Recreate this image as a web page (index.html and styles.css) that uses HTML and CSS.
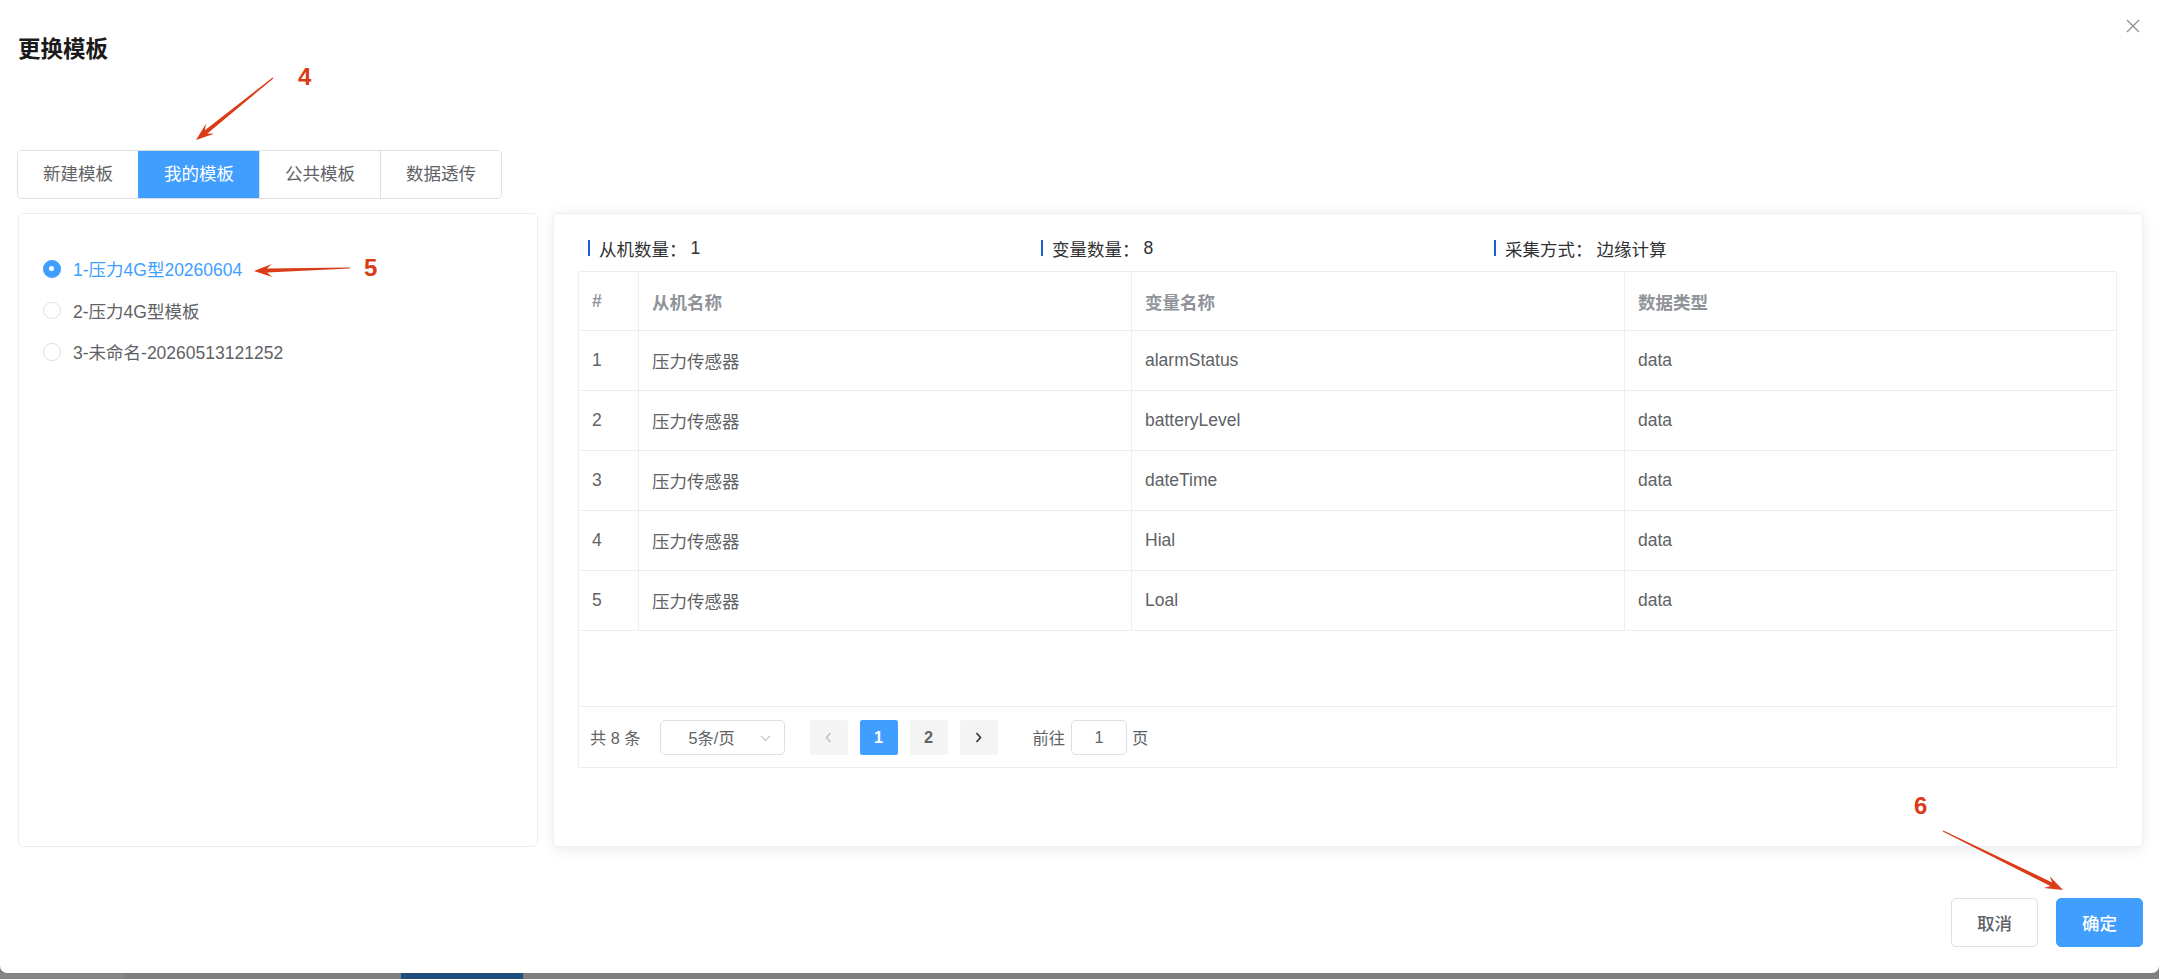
FILE: index.html
```html
<!DOCTYPE html>
<html lang="zh-CN">
<head>
<meta charset="utf-8">
<title>更换模板</title>
<link rel="stylesheet" href="styles.css">
</head>
<body>
<div class="dialog">
  <header class="dialog-header">
    <span class="dialog-title">更换模板</span>
    <button class="close-btn" aria-label="关闭">
      <svg width="14" height="14" viewBox="0 0 14 14"><path d="M1 1L13 13M13 1L1 13" stroke="#909399" stroke-width="1.4" fill="none"/></svg>
    </button>
  </header>

  <div class="tabs">
    <span class="tab">新建模板</span><span class="tab active">我的模板</span><span class="tab">公共模板</span><span class="tab">数据透传</span>
  </div>

  <div class="panels">
    <div class="panel-left">
      <label class="radio checked"><span class="radio-dot"></span><span class="radio-label">1-压力4G型20260604</span></label>
      <label class="radio"><span class="radio-dot"></span><span class="radio-label">2-压力4G型模板</span></label>
      <label class="radio"><span class="radio-dot"></span><span class="radio-label">3-未命名-20260513121252</span></label>
    </div>

    <div class="panel-right">
      <div class="stats">
        <div class="stat"><span class="stat-bar"></span>从机数量：<span class="stat-value">1</span></div>
        <div class="stat"><span class="stat-bar"></span>变量数量：<span class="stat-value">8</span></div>
        <div class="stat"><span class="stat-bar"></span>采集方式：<span class="stat-value">边缘计算</span></div>
      </div>

      <div class="table-box">
        <div class="trow thead">
          <div class="cell">#</div><div class="cell">从机名称</div><div class="cell">变量名称</div><div class="cell">数据类型</div>
        </div>
        <div class="trow">
          <div class="cell">1</div><div class="cell">压力传感器</div><div class="cell">alarmStatus</div><div class="cell">data</div>
        </div>
        <div class="trow">
          <div class="cell">2</div><div class="cell">压力传感器</div><div class="cell">batteryLevel</div><div class="cell">data</div>
        </div>
        <div class="trow">
          <div class="cell">3</div><div class="cell">压力传感器</div><div class="cell">dateTime</div><div class="cell">data</div>
        </div>
        <div class="trow">
          <div class="cell">4</div><div class="cell">压力传感器</div><div class="cell">Hial</div><div class="cell">data</div>
        </div>
        <div class="trow">
          <div class="cell">5</div><div class="cell">压力传感器</div><div class="cell">Loal</div><div class="cell">data</div>
        </div>
        <div class="tempty"></div>
        <div class="pager">
          <span class="pager-total">共 8 条</span>
          <span class="pager-select">5条/页
            <svg class="select-arrow" width="11" height="7" viewBox="0 0 11 7"><path d="M1 1L5.5 5.5L10 1" stroke="#C0C4CC" stroke-width="1.2" fill="none"/></svg>
          </span>
          <span class="pbtn disabled"><svg width="7" height="11" viewBox="0 0 7 11"><path d="M5.5 1L1.5 5.5L5.5 10" stroke="#C0C4CC" stroke-width="1.6" fill="none"/></svg></span>
          <span class="pbtn current">1</span>
          <span class="pbtn">2</span>
          <span class="pbtn"><svg width="7" height="11" viewBox="0 0 7 11"><path d="M1.5 1L5.5 5.5L1.5 10" stroke="#303133" stroke-width="1.6" fill="none"/></svg></span>
          <span class="pager-jump">前往<span class="jump-input">1</span>页</span>
        </div>
      </div>
    </div>
  </div>

  <div class="footer">
    <button class="btn">取消</button>
    <button class="btn primary">确定</button>
  </div>

  <svg class="annot" width="2159" height="979" viewBox="0 0 2159 979">
    <polygon fill="#DB3B17" points="272.62,77.53 204.88,130.29 205.94,123.65 196,140 214.10,133.77 207.38,133.41 273.38,78.47"/>
    <polygon fill="#DB3B17" points="349.98,267.4 266.93,268.59 271.79,263.94 254,271 272.19,276.94 267.05,272.59 350.02,268.6"/>
    <polygon fill="#DB3B17" points="1942.74,831.54 2050.45,886.06 2043.97,887.89 2063,890 2049.71,876.23 2052.21,882.46 1943.26,830.46"/>
  </svg>
  <span class="annot-num n4">4</span>
  <span class="annot-num n5">5</span>
  <span class="annot-num n6">6</span>
</div>
<div class="backdrop-strip"><span class="seg-a"></span><span class="seg-b"></span><span class="seg-blue"></span></div>
</body>
</html>
```

FILE: styles.css
```css
* { box-sizing: border-box; }

body {
  margin: 0;
  background: #7f7f7f;
  font-family: "Liberation Sans", "Noto Sans CJK SC", sans-serif;
  color: #606266;
}

.dialog {
  position: relative;
  width: 2159px;
  height: 973px;
  background: #fff;
  border-radius: 0 0 7px 7px;
  padding: 0 16px 0 18px;
  display: flex;
  flex-direction: column;
}

.dialog-header {
  padding-top: 35px;
  height: 65px;
}

.dialog-title {
  display: block;
  font-size: 22.5px;
  line-height: 30px;
  font-weight: 700;
  color: #1a1a1a;
}

.close-btn {
  position: absolute;
  top: 19px;
  right: 19px;
  width: 14px;
  height: 14px;
  padding: 0;
  border: 0;
  background: none;
  display: flex;
}

.tabs {
  margin-top: 85px;
  margin-left: -1px;
  align-self: flex-start;
  display: flex;
  border: 1px solid #DCDFE6;
  border-radius: 5px;
  overflow: hidden;
}

.tab {
  width: 120px;
  height: 47px;
  line-height: 47px;
  text-align: center;
  font-size: 17.5px;
  color: #606266;
  background: #fff;
}

.tab + .tab { border-left: 1px solid #DCDFE6; width: 121px; }

.tab.active {
  background: #409EFF;
  color: #fff;
  border-left-color: #409EFF;
}

.panels {
  margin-top: 14px;
  display: flex;
  gap: 15px;
  height: 634px;
}

.panel-left {
  width: 520px;
  border: 1px solid #EBEEF5;
  border-radius: 5px;
  padding: 34px 0 0 24px;
  display: flex;
  flex-direction: column;
}

.radio {
  height: 41.5px;
  display: flex;
  align-items: center;
  font-size: 17.5px;
  color: #606266;
}

.radio-dot {
  width: 17.5px;
  height: 17.5px;
  border: 1px solid #DCDFE6;
  border-radius: 50%;
  background: #fff;
  display: flex;
  align-items: center;
  justify-content: center;
  flex: none;
}

.radio.checked .radio-dot {
  background: #409EFF;
  border-color: #409EFF;
}

.radio.checked .radio-dot::after {
  content: "";
  width: 5px;
  height: 5px;
  border-radius: 50%;
  background: #fff;
}

.radio-label { margin-left: 12.5px; }
.radio.checked .radio-label { color: #409EFF; }

.panel-right {
  flex: 1;
  border: 1px solid #EBEEF5;
  border-radius: 5px;
  box-shadow: 0 2px 15px 0 rgba(0, 0, 0, 0.09);
  padding: 20px 25px 0 24px;
}

.stats {
  display: grid;
  grid-template-columns: 453px 453px 453px;
  padding-left: 10px;
  height: 28px;
  margin-bottom: 9px;
}

.stat {
  display: flex;
  align-items: center;
  font-size: 17.5px;
  color: #303133;
}

.stat-value { margin-left: 4px; }

.stat-bar {
  width: 2px;
  height: 16px;
  background: #1E5FD9;
  margin-right: 9px;
}

.table-box {
  border: 1px solid #EBEEF5;
}

.trow {
  display: grid;
  grid-template-columns: 60px 493px 493px 1fr;
  height: 60px;
  border-bottom: 1px solid #EBEEF5;
}

.trow.thead { height: 59px; }

.cell {
  display: flex;
  align-items: center;
  padding-left: 13px;
  font-size: 17.5px;
  color: #606266;
  border-right: 1px solid #EBEEF5;
}

.cell:last-child { border-right: 0; }

.thead .cell {
  font-weight: 700;
  color: #909399;
}

.tempty {
  height: 76px;
  border-bottom: 1px solid #EBEEF5;
}

.pager {
  height: 60px;
  display: flex;
  align-items: center;
  padding-left: 11px;
  font-size: 16.25px;
  color: #606266;
}

.pager-total { margin-right: 19px; }

.pager-select {
  position: relative;
  width: 125px;
  height: 35px;
  border: 1px solid #DCDFE6;
  border-radius: 5px;
  display: flex;
  align-items: center;
  padding-left: 28px;
  margin-right: 19px;
}

.select-arrow {
  position: absolute;
  right: 13px;
  top: 14px;
}

.pbtn {
  width: 38px;
  height: 35px;
  margin: 0 6px;
  background: #F4F4F5;
  border-radius: 2.5px;
  display: flex;
  align-items: center;
  justify-content: center;
  font-weight: 700;
  color: #606266;
}

.pbtn.current {
  background: #409EFF;
  color: #fff;
}

.pager-jump {
  display: flex;
  align-items: center;
  margin-left: 29px;
}

.jump-input {
  width: 56px;
  height: 35px;
  border: 1px solid #DCDFE6;
  border-radius: 5px;
  margin: 0 5px 0 6px;
  display: flex;
  align-items: center;
  justify-content: center;
}

.footer {
  margin-top: 51px;
  display: flex;
  justify-content: flex-end;
  gap: 18px;
}

.btn {
  height: 49px;
  padding: 0 25px;
  border: 1px solid #DCDFE6;
  border-radius: 5px;
  background: #fff;
  font-family: "Liberation Sans", "Noto Sans CJK SC", sans-serif;
  font-size: 17.5px;
  font-weight: 500;
  color: #606266;
}

.btn.primary {
  background: #409EFF;
  border-color: #409EFF;
  color: #fff;
}

.annot {
  position: absolute;
  left: 0;
  top: 0;
  pointer-events: none;
}

.annot-num {
  position: absolute;
  font-family: "Liberation Sans", sans-serif;
  font-size: 24px;
  line-height: 24px;
  font-weight: 700;
  color: #DB3B17;
}

.n4 { left: 298px; top: 65px; }
.n5 { left: 364px; top: 256px; }
.n6 { left: 1914px; top: 794px; }

.backdrop-strip {
  height: 6px;
  display: flex;
}

.seg-a { width: 126px; background: #858585; }
.seg-b { width: 275px; background: #7f7f7f; }
.seg-blue { width: 122px; background: #1F4D7E; }
```
